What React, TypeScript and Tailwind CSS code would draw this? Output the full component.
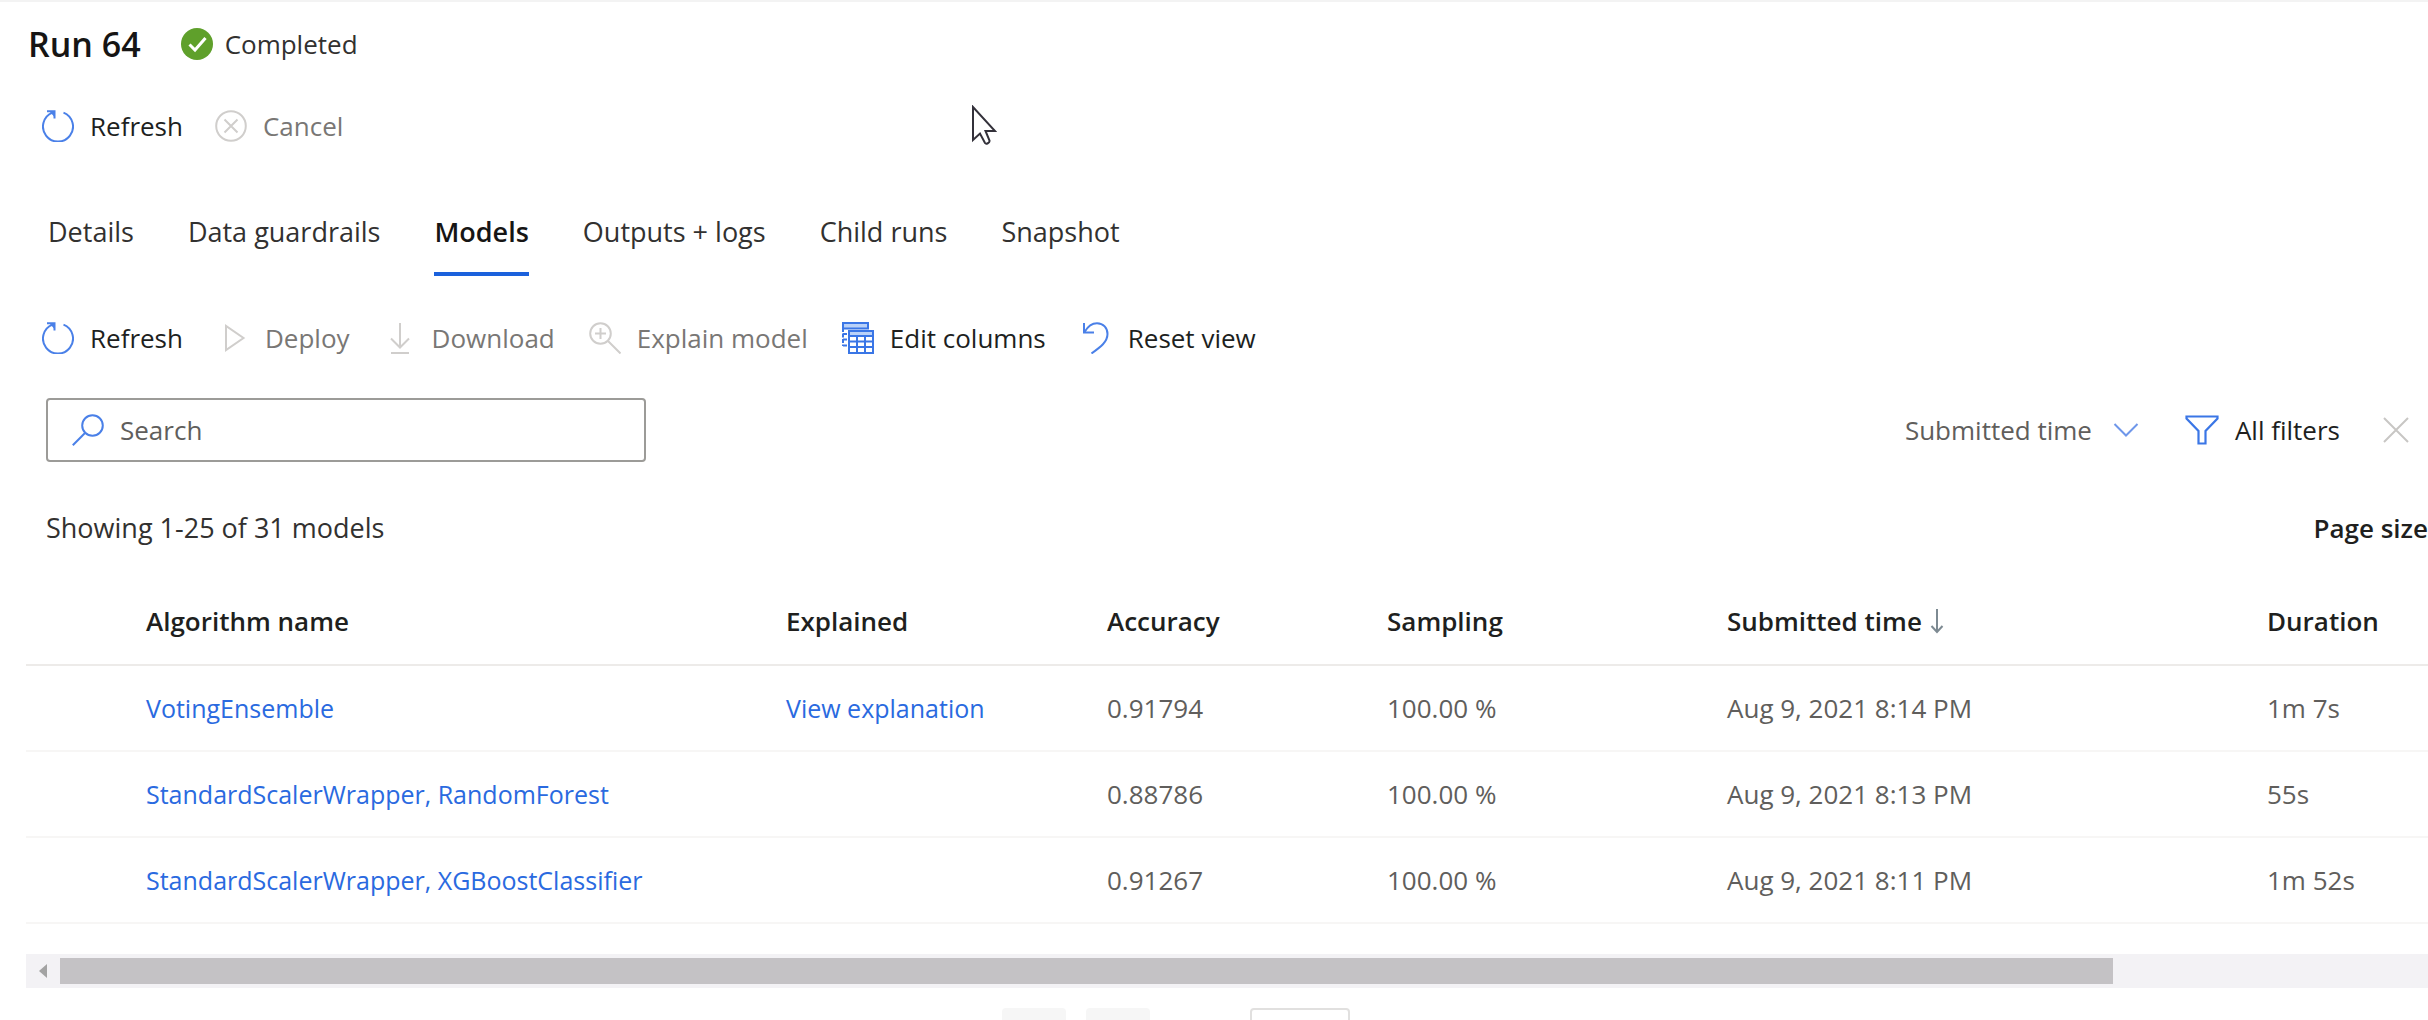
import type { ReactNode } from "react";

type IconProps = { children: ReactNode; className?: string };

function Icon({ children, className = "" }: IconProps) {
  return (
    <svg
      viewBox="0 0 32 32"
      fill="none"
      stroke="currentColor"
      strokeWidth="2"
      aria-hidden="true"
      className={`h-8 w-8 shrink-0 ${className}`}
    >
      {children}
    </svg>
  );
}

const RefreshIcon = () => (
  <Icon className="text-[#4a80e8]">
    <path d="M21.5 2.6A15 15 0 1 1 10.500 2.6" />
    <path d="M5 1.2h7.500v7.300" />
    <path d="M7 1h5.500v6z" fill="currentColor" stroke="none" />
  </Icon>
);

const CancelIcon = () => (
  <Icon className="text-[#d0cecc]">
    <circle cx="16" cy="16" r="14.8" />
    <path d="M9.5 9.5l13 13M22.5 9.5l-13 13" />
  </Icon>
);

const DeployIcon = () => (
  <Icon className="text-[#d0cecc]">
    <path d="M9 4v24l17.5-12z" />
  </Icon>
);

const DownloadIcon = () => (
  <Icon className="text-[#d0cecc]">
    <path d="M16 1v24M7 16.5l9 9 9-9M7 31h18" />
  </Icon>
);

const ExplainIcon = () => (
  <Icon className="text-[#d0cecc]">
    <circle cx="11.5" cy="11.5" r="10.3" />
    <path d="M19 19l12.5 12.5M6 11.5h11M11.5 6v11" />
  </Icon>
);

const ColumnsIcon = () => (
  <Icon className="text-[#3a76e6]">
    <path d="M1 1h25v5.500H1z" fill="#b9d1f8" />
    <path d="M1 6v18M1 12h5M1 17.500h5M1 23.500h5" strokeDasharray="4 1.500" />
    <path d="M7 9h24v22H7z" fill="#fff" />
    <path d="M7 9h24v5H7z" fill="#b9d1f8" />
    <path d="M7 19.500h24M7 25h24M15 14v17M23 14v17" />
  </Icon>
);

const ResetIcon = () => (
  <Icon className="text-[#4a80e8]">
    <path d="M4 1v9.5h10" />
    <path d="M4.5 10C8 4 12 1.2 17 1.2c6.5 0 10.500 5 10.500 10.8 0 8-7 13-16 19.5" />
  </Icon>
);

const SearchIcon = () => (
  <Icon className="text-[#4a80e8]">
    <circle cx="20.5" cy="11.5" r="10.3" />
    <path d="M13 19L.8 31.2" />
  </Icon>
);

type CommandProps = { icon: ReactNode; label: string; disabled?: boolean };

function Command({ icon, label, disabled = false }: CommandProps) {
  return (
    <button
      type="button"
      disabled={disabled}
      className="flex shrink-0 items-center gap-4 text-[#201f1e] disabled:text-[#797775]"
    >
      {icon}
      {label}
    </button>
  );
}

const tabs = ["Details", "Data guardrails", "Models", "Outputs + logs", "Child runs", "Snapshot"];

const models = [
  { name: "VotingEnsemble", explained: true, accuracy: "0.91794", submitted: "Aug 9, 2021 8:14 PM", duration: "1m 7s" },
  { name: "StandardScalerWrapper, RandomForest", explained: false, accuracy: "0.88786", submitted: "Aug 9, 2021 8:13 PM", duration: "55s" },
  { name: "StandardScalerWrapper, XGBoostClassifier", explained: false, accuracy: "0.91267", submitted: "Aug 9, 2021 8:11 PM", duration: "1m 52s" },
];

function Pointer() {
  return (
    <svg viewBox="0 0 26 40" aria-hidden="true" className="pointer-events-none absolute top-[103px] left-[971px] h-10 w-[26px]">
      <path d="M2 2v33l7-6.500 5 9.500c1 1.500 5 0 4.500-2.500L14.500 26H24z" fill="#fff" stroke="#33313a" strokeWidth="2" />
    </svg>
  );
}

export default function App() {
  return (
    <main className="relative flex h-screen flex-col overflow-hidden border-t-2 border-[#f3f3f3] bg-white font-['Open_Sans','Noto_Sans',sans-serif] text-[26px] leading-9 whitespace-nowrap text-[#323130]">
      <header className="flex h-[84px] shrink-0 items-center gap-10 pl-7">
        <h1 className="text-[34px] font-semibold text-[#161514]">Run 64</h1>
        <p className="flex items-center gap-3">
          <svg viewBox="0 0 32 32" aria-hidden="true" className="h-8 w-8">
            <circle cx="16" cy="16" r="16" fill="#5fa02b" />
            <path d="M8.500 16.500l5.500 5.500L24.500 10" fill="none" stroke="#fff" strokeWidth="3" />
          </svg>
          Completed
        </p>
      </header>

      <div className="flex h-20 shrink-0 items-center gap-8 pl-[42px]">
        <Command icon={<RefreshIcon />} label="Refresh" />
        <Command icon={<CancelIcon />} label="Cancel" disabled />
      </div>

      <nav role="tablist" className="mt-[22px] flex h-[88px] shrink-0 gap-[54px] pl-12 text-[27px]">
        {tabs.map((tab) => (
          <button
            key={tab}
            type="button"
            role="tab"
            aria-selected={tab === "Models"}
            className="border-y-4 border-transparent aria-selected:border-b-[#1b61dc] aria-selected:font-semibold aria-selected:text-[#161514]"
          >
            {tab}
          </button>
        ))}
      </nav>

      <div className="mt-6 flex h-[76px] shrink-0 items-center gap-[34px] pl-[42px]">
        <Command icon={<RefreshIcon />} label="Refresh" />
        <Command icon={<DeployIcon />} label="Deploy" disabled />
        <Command icon={<DownloadIcon />} label="Download" disabled />
        <Command icon={<ExplainIcon />} label="Explain model" disabled />
        <Command icon={<ColumnsIcon />} label="Edit columns" />
        <Command icon={<ResetIcon />} label="Reset view" />
      </div>

      <div className="mt-[22px] flex h-16 shrink-0 items-center justify-between pr-[18px] pl-[46px]">
        <label className="flex h-full w-[600px] items-center gap-4 rounded border-2 border-[#9c9b98] pl-6">
          <SearchIcon />
          <input
            type="search"
            aria-label="Search"
            placeholder="Search"
            className="min-w-0 flex-1 outline-none placeholder:text-[#605e5c]"
          />
        </label>
        <div className="flex items-center">
          <div className="flex items-center gap-5">
            <select aria-label="Filter by column" className="appearance-none text-[#605e5c]">
              <option>Submitted time</option>
            </select>
            <svg viewBox="0 0 26 16" aria-hidden="true" className="h-4 w-[26px]" fill="none" stroke="#6f97ea" strokeWidth="2">
              <path d="M1.500 2L13 13.500 24.500 2" />
            </svg>
          </div>
          <button type="button" className="ml-[46px] flex items-center gap-4 text-[#201f1e]">
            <svg viewBox="0 0 34 30" aria-hidden="true" className="h-[30px] w-[34px]" fill="none" stroke="#3a76e6" strokeWidth="2.200">
              <path d="M1.500 1.500h31v2L20.500 16v12.500h-7V16L1.500 3.500z" />
            </svg>
            All filters
          </button>
          <button type="button" aria-label="Clear filters" className="ml-[42px]">
            <svg viewBox="0 0 28 28" aria-hidden="true" className="h-7 w-7" fill="none" stroke="#c8c6c4" strokeWidth="2">
              <path d="M2 2l24 24M26 2L2 26" />
            </svg>
          </button>
        </div>
      </div>

      <div className="mt-9 flex h-[60px] shrink-0 items-center justify-between pl-[46px]">
        <p className="text-[27px]">Showing 1-25 of 31 models</p>
        <p className="font-semibold text-[#201f1e]">Page size</p>
      </div>

      <div className="mt-5 shrink-0 pl-[26px]">
        <table className="w-full table-fixed border-separate border-spacing-0 text-left text-[#605e5c]">
          <colgroup>
            <col className="w-[120px]" />
            <col />
            <col className="w-[321px]" />
            <col className="w-[280px]" />
            <col className="w-[340px]" />
            <col className="w-[540px]" />
            <col className="w-[161px]" />
          </colgroup>
          <thead>
            <tr className="h-[88px] text-[#201f1e] *:border-b-2 *:border-[#edebe9] *:font-semibold">
              <td />
              <th scope="col">Algorithm name</th>
              <th scope="col">Explained</th>
              <th scope="col">Accuracy</th>
              <th scope="col">Sampling</th>
              <th scope="col" aria-sort="descending">
                <span className="flex items-center gap-2">
                  Submitted time
                  <svg viewBox="0 0 14 26" aria-hidden="true" className="h-[26px] w-[14px]" fill="none" stroke="#7d8a92" strokeWidth="2">
                    <path d="M7 1v22M1.500 18L7 24l5.500-6" />
                  </svg>
                </span>
              </th>
              <th scope="col">Duration</th>
            </tr>
          </thead>
          <tbody>
            {models.map((model) => (
              <tr key={model.name} className="h-[86px] *:border-b-2 *:border-[#f7f6f5]">
                <td />
                <td className="text-[25px]">
                  <a href="#model" className="text-[#2a6ae0]">{model.name}</a>
                </td>
                <td className="text-[25px]">
                  {model.explained && <a href="#explanation" className="text-[#2a6ae0]">View explanation</a>}
                </td>
                <td>{model.accuracy}</td>
                <td>100.00 %</td>
                <td>{model.submitted}</td>
                <td>{model.duration}</td>
              </tr>
            ))}
          </tbody>
        </table>

        <div className="mt-[30px] flex h-[34px] items-center bg-[#f3f2f5]">
          <button type="button" aria-label="Scroll left" className="flex h-full w-[34px] items-center justify-center">
            <svg viewBox="0 0 8 14" aria-hidden="true" className="h-[14px] w-2" fill="#a3a3a3">
              <path d="M8 0v14L0 7z" />
            </svg>
          </button>
          <div className="flex-1">
            <div className="h-[26px] w-[86.7%] bg-[#c4c2c5]" />
          </div>
        </div>
      </div>

      <div className="mt-5 flex shrink-0 justify-center pr-[76px]">
        <button type="button" aria-label="First page" className="h-16 w-16 rounded bg-[#f6f6f6]" />
        <button type="button" aria-label="Previous page" className="ml-5 h-16 w-16 rounded bg-[#f6f6f6]" />
        <input aria-label="Page number" className="ml-[100px] h-16 w-[100px] rounded border-2 border-[#e1e0df]" />
      </div>

      <Pointer />
    </main>
  );
}
